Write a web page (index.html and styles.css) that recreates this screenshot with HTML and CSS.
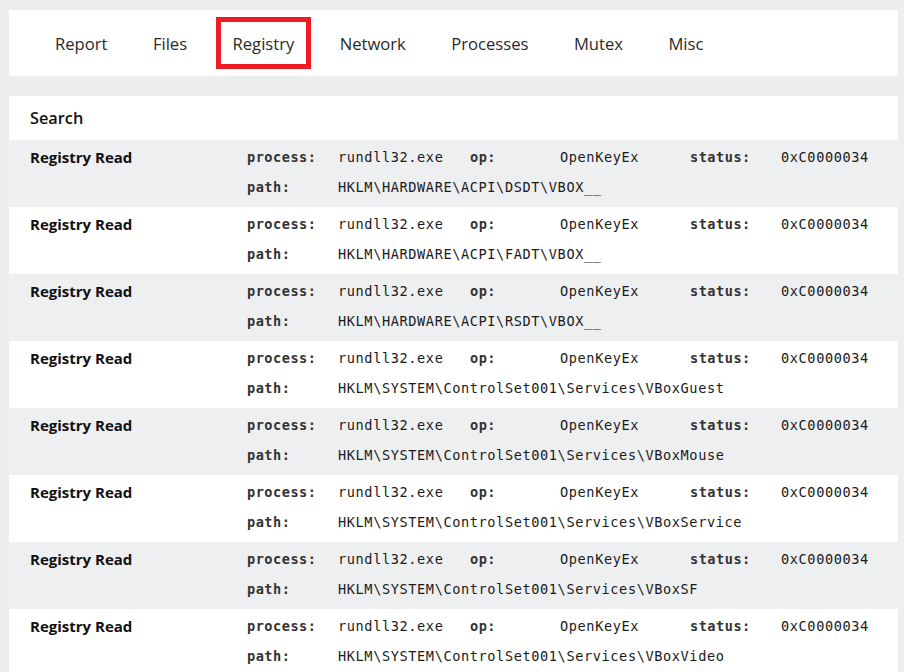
FILE: index.html
```html
<!DOCTYPE html>
<html>
<head>
<meta charset="utf-8">
<link rel="stylesheet" href="styles.css">
</head>
<body>
<nav class="tabs">
  <span class="tab">Report</span>
  <span class="tab">Files</span>
  <span class="tab active">Registry</span>
  <span class="tab">Network</span>
  <span class="tab">Processes</span>
  <span class="tab">Mutex</span>
  <span class="tab">Misc</span>
</nav>
<section class="card">
  <h2 class="card-title">Search</h2>
  <div class="row">
    <div class="title">Registry Read</div>
    <div class="lbl">process:</div><div class="val">rundll32.exe</div>
    <div class="lbl">op:</div><div class="val">OpenKeyEx</div>
    <div class="lbl">status:</div><div class="val">0xC0000034</div>
    <div class="lbl path-lbl">path:</div><div class="val path">HKLM\HARDWARE\ACPI\DSDT\VBOX__</div>
  </div>
  <div class="row">
    <div class="title">Registry Read</div>
    <div class="lbl">process:</div><div class="val">rundll32.exe</div>
    <div class="lbl">op:</div><div class="val">OpenKeyEx</div>
    <div class="lbl">status:</div><div class="val">0xC0000034</div>
    <div class="lbl path-lbl">path:</div><div class="val path">HKLM\HARDWARE\ACPI\FADT\VBOX__</div>
  </div>
  <div class="row">
    <div class="title">Registry Read</div>
    <div class="lbl">process:</div><div class="val">rundll32.exe</div>
    <div class="lbl">op:</div><div class="val">OpenKeyEx</div>
    <div class="lbl">status:</div><div class="val">0xC0000034</div>
    <div class="lbl path-lbl">path:</div><div class="val path">HKLM\HARDWARE\ACPI\RSDT\VBOX__</div>
  </div>
  <div class="row">
    <div class="title">Registry Read</div>
    <div class="lbl">process:</div><div class="val">rundll32.exe</div>
    <div class="lbl">op:</div><div class="val">OpenKeyEx</div>
    <div class="lbl">status:</div><div class="val">0xC0000034</div>
    <div class="lbl path-lbl">path:</div><div class="val path">HKLM\SYSTEM\ControlSet001\Services\VBoxGuest</div>
  </div>
  <div class="row">
    <div class="title">Registry Read</div>
    <div class="lbl">process:</div><div class="val">rundll32.exe</div>
    <div class="lbl">op:</div><div class="val">OpenKeyEx</div>
    <div class="lbl">status:</div><div class="val">0xC0000034</div>
    <div class="lbl path-lbl">path:</div><div class="val path">HKLM\SYSTEM\ControlSet001\Services\VBoxMouse</div>
  </div>
  <div class="row">
    <div class="title">Registry Read</div>
    <div class="lbl">process:</div><div class="val">rundll32.exe</div>
    <div class="lbl">op:</div><div class="val">OpenKeyEx</div>
    <div class="lbl">status:</div><div class="val">0xC0000034</div>
    <div class="lbl path-lbl">path:</div><div class="val path">HKLM\SYSTEM\ControlSet001\Services\VBoxService</div>
  </div>
  <div class="row">
    <div class="title">Registry Read</div>
    <div class="lbl">process:</div><div class="val">rundll32.exe</div>
    <div class="lbl">op:</div><div class="val">OpenKeyEx</div>
    <div class="lbl">status:</div><div class="val">0xC0000034</div>
    <div class="lbl path-lbl">path:</div><div class="val path">HKLM\SYSTEM\ControlSet001\Services\VBoxSF</div>
  </div>
  <div class="row">
    <div class="title">Registry Read</div>
    <div class="lbl">process:</div><div class="val">rundll32.exe</div>
    <div class="lbl">op:</div><div class="val">OpenKeyEx</div>
    <div class="lbl">status:</div><div class="val">0xC0000034</div>
    <div class="lbl path-lbl">path:</div><div class="val path">HKLM\SYSTEM\ControlSet001\Services\VBoxVideo</div>
  </div>
</section>
</body>
</html>
```

FILE: styles.css
```css
html {
  overflow: hidden;
  background: #eceef0;
}
body {
  margin: 0;
  padding: 10px 6px 0 9px;
  background: #eceef0;
  font-family: "Open Sans", "Noto Sans", sans-serif;
  color: #1b1b1b;
}
.tabs {
  background: #fff;
  height: 66px;
  display: flex;
  align-items: center;
  gap: 11.5px;
  padding-left: 29px;
  box-sizing: border-box;
}
.tab {
  display: flex;
  align-items: center;
  height: 52px;
  box-sizing: border-box;
  padding: 0 12px;
  border: 5px solid transparent;
  font-size: 16.6px;
  color: #2a2a2a;
}
.tab.active {
  border-color: #ed1c24;
}
.card {
  margin-top: 20px;
  background: #fff;
}
.card-title {
  margin: 0;
  height: 44px;
  line-height: 44px;
  padding-left: 21px;
  font-size: 16.3px;
  font-weight: 600;
  color: #111;
}
.row {
  display: grid;
  grid-template-columns: 217px 91px 132px 90px 130px 91px 1fr;
  padding: 1.5px 0 5.5px 21px;
  line-height: 30px;
}
.row:nth-child(even) {
  background: #eeeff1;
}
.title {
  font-weight: 700;
  font-size: 15px;
  color: #111;
}
.lbl {
  font-family: "DejaVu Sans Mono", monospace;
  font-weight: 700;
  font-size: 13.6px;
  letter-spacing: 0.5px;
  color: #333;
}
.val {
  font-family: "DejaVu Sans Mono", monospace;
  font-size: 13.6px;
  letter-spacing: 0.6px;
  color: #1b1b1b;
  white-space: nowrap;
}
.path-lbl {
  grid-column: 2;
}
.path {
  grid-column: 3 / -1;
}
```
